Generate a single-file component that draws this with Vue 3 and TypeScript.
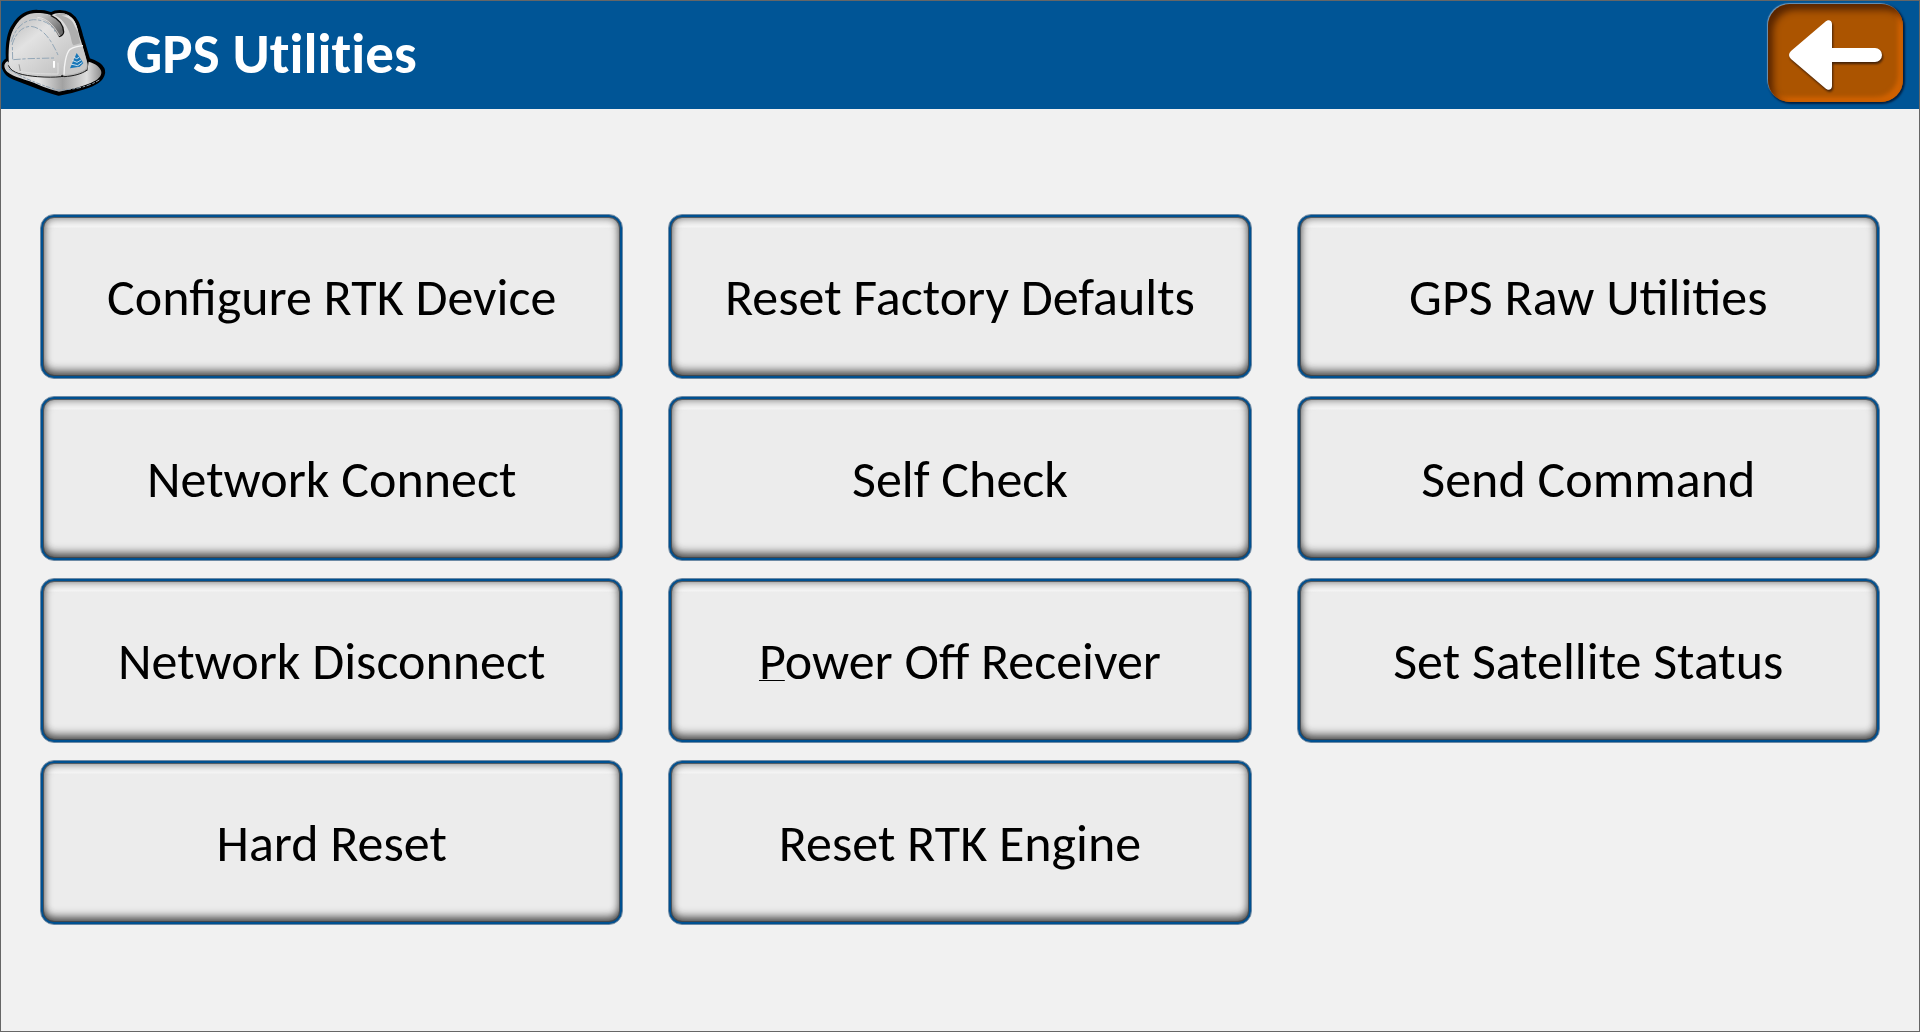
<script setup lang="ts">
interface Action {
  label: string
  accessKey?: string
}

const title: string = 'GPS Utilities'

const actions: Action[] = [
  { label: 'Configure RTK Device' },
  { label: 'Reset Factory Defaults' },
  { label: 'GPS Raw Utilities' },
  { label: 'Network Connect' },
  { label: 'Self Check' },
  { label: 'Send Command' },
  { label: 'Network Disconnect' },
  { label: 'Power Off Receiver', accessKey: 'P' },
  { label: 'Set Satellite Status' },
  { label: 'Hard Reset' },
  { label: 'Reset RTK Engine' },
]
</script>

<template>
  <div class="screen">
    <header class="bar">
      <svg class="helmet" viewBox="3 3 324 324" aria-hidden="true">
        <defs>
          <linearGradient id="shell" x1="0" y1="0" x2="1" y2="1">
            <stop offset="0" stop-color="#b4b4b4" />
            <stop offset="0.35" stop-color="#e2e2e2" />
            <stop offset="0.75" stop-color="#c6c6c6" />
            <stop offset="1" stop-color="#a9a9a9" />
          </linearGradient>
          <linearGradient id="brim" x1="0" y1="0" x2="1" y2="0">
            <stop offset="0" stop-color="#c4c4c4" />
            <stop offset="0.35" stop-color="#e6e6e6" />
            <stop offset="0.6" stop-color="#a2a2a2" />
            <stop offset="0.85" stop-color="#dedede" />
            <stop offset="1" stop-color="#8f8f8f" />
          </linearGradient>
          <linearGradient id="ridge" x1="0" y1="0" x2="1" y2="0.5">
            <stop offset="0" stop-color="#d4d4d4" />
            <stop offset="0.5" stop-color="#c4c4c4" />
            <stop offset="1" stop-color="#6c6c6c" />
          </linearGradient>
        </defs>
        <path
          d="M22 178 C20 140 22 100 42 74 C60 46 84 33 112 34 C132 34 142 37 153 41 C168 32 192 32 210 42 C234 58 238 82 245 108 C253 134 260 160 266 178 C288 184 312 198 311 218 C307 242 284 254 250 264 C226 272 204 278 176 283 C146 276 112 262 76 248 C48 238 22 230 14 212 C6 198 8 186 22 178 Z"
          fill="#000" stroke="#000" stroke-width="9" stroke-linejoin="round"
        />
        <path
          d="M23 184 C10 190 10 204 22 216 C40 232 80 238 112 253 C140 265 160 271 177 275 C214 268 250 258 274 248 C294 240 305 228 304 216 C302 202 286 190 266 185 L262 212 L187 231 L60 222 Z"
          fill="url(#brim)"
        />
        <path
          d="M26 180 C25 140 28 104 46 78 C62 50 86 38 112 39 C132 39 144 42 154 46 C170 36 190 38 206 46 C228 60 232 84 239 110 C248 138 257 166 263 192 C264 204 262 210 252 216 C234 224 212 229 190 230 L186 226 L182 230 C140 234 92 232 62 222 C38 214 26 204 26 180 Z"
          fill="url(#shell)"
        />
        <path d="M164 46 C184 54 198 74 207 94 C216 120 214 130 221 136 L241 130 C232 94 232 62 204 46 C190 38 176 38 164 46 Z" fill="#aeaeae" />
        <path d="M184 47 C204 50 218 60 225 80 L234 96 C230 70 220 52 202 46 Z" fill="#dcdcdc" />
        <path
          d="M34 124 C38 86 66 58 98 52 C138 54 160 78 176 110 C186 108 190 102 191 94 C186 70 170 56 152 47 C126 37 90 38 66 56 C46 74 34 94 34 124 Z"
          fill="url(#ridge)"
        />
        <path d="M152 46 C174 56 190 74 191 96 C190 104 184 108 177 110" fill="none" stroke="#111" stroke-width="4" />
        <path d="M112 52 C142 54 163 78 179 108" fill="none" stroke="#f3f3f3" stroke-width="2" />
        <path
          d="M34 125 C46 84 70 62 100 59 C132 59 154 72 166 96 M38 178 L37 132 C48 98 66 80 92 79 C130 82 158 126 176 170 M40 179 L82 176 L162 174"
          fill="none" stroke="#94a7b7" stroke-width="3" stroke-dasharray="22 5 10 6"
        />
        <path d="M60 214 C90 220 120 222 174 222 L174 188" fill="none" stroke="#dedede" stroke-width="3" />
        <path d="M57 193 L61 213" stroke="#999" stroke-width="3" />
        <path d="M162 183 L162 203" stroke="#fff" stroke-width="6" />
        <path d="M192 224 C192 196 198 160 210 148 C220 142 234 138 247 137 L260 184 C262 200 260 208 246 213 C230 220 210 224 192 224 Z" fill="#c8c8c8" />
        <path d="M192 224 C192 196 198 160 210 148 C220 142 234 138 249 137" fill="none" stroke="#f4f4f4" stroke-width="4" />
        <path d="M25 196 C34 220 70 226 112 230 C140 232 164 232 182 230 L187 226 L192 230 C222 228 244 222 260 211" fill="none" stroke="#1c1c1c" stroke-width="3" />
        <path d="M26 207 C70 236 120 253 170 270 C222 270 266 260 298 240" fill="none" stroke="#8fa1b1" stroke-width="3" stroke-dasharray="14 5 8 4" />
        <path d="M230 159 L250 189 L239 200 L210 205 Z" fill="#1877b8" />
        <path
          d="M220 171 L230 176 L237 172 M216 181 L231 187 L243 180 M212 192 L233 197 L247 187"
          fill="none" stroke="#cfe0ec" stroke-width="3"
        />
      </svg>

      <h1 class="title">{{ title }}</h1>

      <button class="back" type="button" aria-label="Back">
        <svg class="arrow" viewBox="0 0 94 70" aria-hidden="true">
          <path
            d="M2 31 L36 2 C39 -1 43 0 43 4 V28 H86 A7 7 0 0 1 86 42 H43 V66 C43 70 39 71 36 68 L2 39 Q-2 35 2 31 Z"
            fill="#fff"
          />
        </svg>
      </button>
    </header>

    <main class="actions">
      <button v-for="action in actions" :key="action.label" class="action" type="button">
        <span v-if="action.accessKey"><span class="key">{{ action.accessKey }}</span>{{ action.label.slice(1) }}</span>
        <span v-else>{{ action.label }}</span>
      </button>
    </main>
  </div>
</template>

<style>
body {
  margin: 0;
  background: #f1f1f1;
}
</style>

<style scoped>
.screen {
  box-sizing: border-box;
  min-height: 100vh;
  border: 1px solid #666;
  background: #f1f1f1;
  font-family: Calibri, Carlito, Lato, sans-serif;
}

.bar {
  display: flex;
  align-items: center;
  height: 108px;
  background: #005596;
}

.helmet {
  flex: none;
  width: 108px;
  height: 108px;
}

.title {
  flex: 1;
  margin: 0 0 2px 17px;
  color: #fff;
  font-size: 57px;
  font-weight: 700;
  font-variant-ligatures: none;
  line-height: 68px;
}

.back {
  display: flex;
  align-items: center;
  justify-content: center;
  box-sizing: border-box;
  width: 135px;
  height: 98px;
  margin: 0 16px 4px 0;
  padding: 3px 0 0;
  border: 0;
  border-radius: 22px;
  background: #ab5400;
  box-shadow:
    inset 5px 6px 7px rgba(60, 22, 0, 0.75),
    inset -5px -5px 4px #d06200,
    -1px -1px 1px 0 rgba(190, 205, 220, 0.6),
    1px 1px 2px 1px rgba(0, 15, 40, 0.75);
}

.arrow {
  width: 94px;
  height: 70px;
  overflow: visible;
  filter: drop-shadow(1px 2px 1px rgba(40, 20, 10, 0.8));
}

.actions {
  display: grid;
  grid-template-columns: repeat(3, 1fr);
  gap: 17px 45px;
  padding: 105px 39px;
}

.action {
  min-height: 165px;
  padding: 0 16px;
  border: 1px solid #6d8aa5;
  border-radius: 14px;
  background: linear-gradient(#f5f5f5 12px, #ececec 13px);
  box-shadow:
    inset 0 0 0 2px #005090,
    inset 0 0 0 3px rgba(50, 60, 70, 0.7),
    inset 0 0 8px 3px rgba(0, 0, 0, 0.55),
    inset 0 -8px 8px rgba(0, 0, 0, 0.45);
  color: #000;
  font-family: inherit;
  font-size: 52px;
  line-height: 60px;
}

.key {
  text-decoration: underline;
  text-decoration-thickness: 1px;
  text-underline-offset: 1px;
}
</style>
